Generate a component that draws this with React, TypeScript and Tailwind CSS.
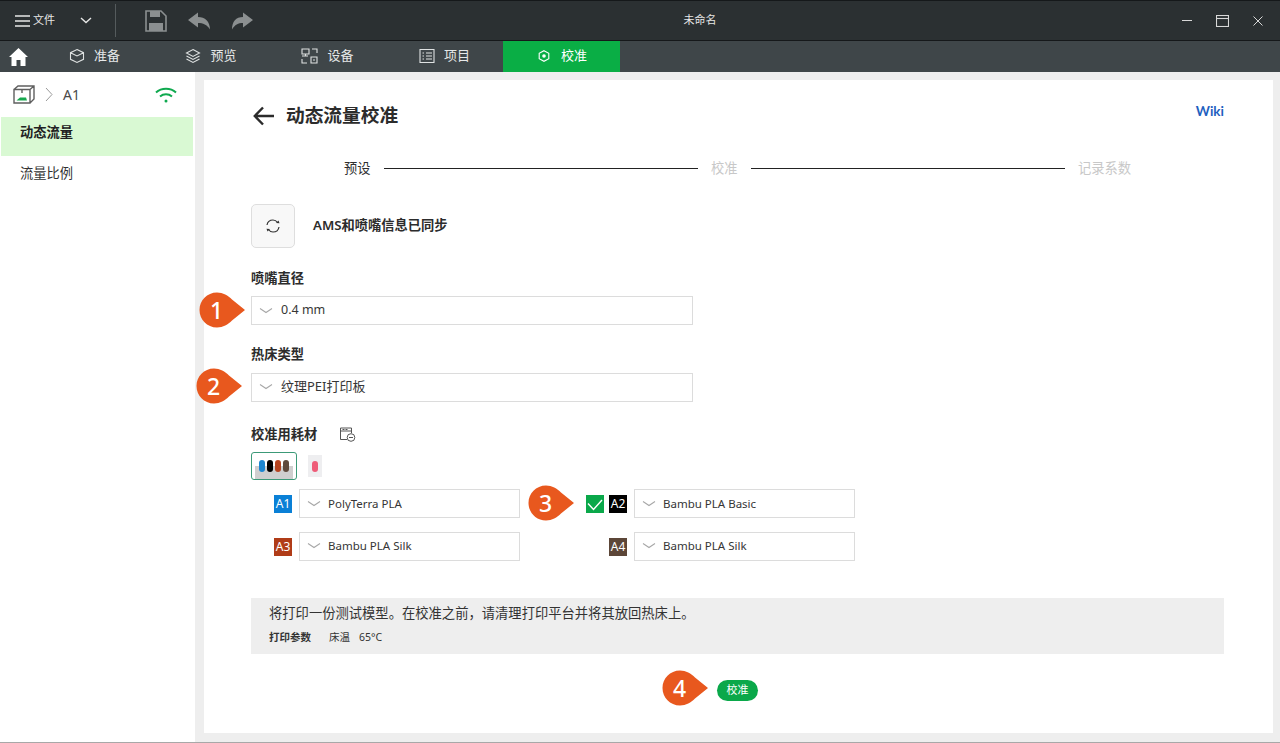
import type { ReactNode } from 'react';

const font = { fontFamily: '"Noto Sans", "Noto Sans CJK SC", sans-serif' };

const Chevron = () => (
  <svg width="14" height="8" viewBox="0 0 14 8" fill="none" stroke="#a8a8a8" strokeWidth="1.1" className="shrink-0">
    <path d="M1 1.5 7 5.5 13 1.5" />
  </svg>
);

const Select = ({ value, className }: { value: string; className: string }) => (
  <div className={`flex h-[29px] items-center border border-[#dcdcdc] pl-[7px] text-[#363636] ${className}`}>
    <Chevron />
    <span className="ml-[8px]">{value}</span>
  </div>
);

const FilamentSelect = ({ value, className }: { value: string; className: string }) => (
  <div className={`flex h-[29px] w-[221px] items-center border border-[#dcdcdc] pl-[7px] text-[11.5px] text-[#363636] ${className}`}>
    <Chevron />
    <span className="ml-[7px]">{value}</span>
  </div>
);

const Badge = ({ n, className }: { n: number; className: string }) => (
  <div className={`absolute flex h-[36px] w-[47px] ${className}`}>
    <svg width="47" height="36" viewBox="0 0 47 36" className="absolute inset-0">
      <path d="M18 0.5C24 0.5 29 3.5 33 7.5L46 18 33 28.5C29 32.5 24 35.5 18 35.5 8 35.5 0.5 27.5 0.5 18 0.5 8.5 8 0.5 18 0.5Z" fill="#e8581e" />
    </svg>
    <span className="relative w-[35px] text-center text-[23px] leading-[36px] font-medium text-white">{n}</span>
  </div>
);

const Tag = ({ label, color }: { label: string; color: string }) => (
  <div className={`flex h-[18px] w-[18px] items-center justify-center text-[12px] leading-none text-white ${color}`}>{label}</div>
);

const NavTab = ({ icon, label, className }: { icon: ReactNode; label: string; className: string }) => (
  <div className={`flex h-full items-center justify-center pb-px text-[13px] ${className}`}>
    {icon}
    <span>{label}</span>
  </div>
);

const navStroke = { fill: 'none', stroke: '#dfe2e2', strokeWidth: 1.1 };

const Label = ({ text, className }: { text: string; className: string }) => (
  <div className={`h-5 text-[13.25px] leading-5 font-semibold text-[#2c2c2c] ${className}`}>{text}</div>
);

export default function App() {
  return (
    <div className="flex h-[743px] w-[1280px] flex-col overflow-hidden bg-[#eeeeee]" style={font}>
      {/* title bar */}
      <div className="flex h-[41px] shrink-0 items-center border-y border-[#15181a] bg-[#2b3032] text-[#e6e6e6]">
        <div className="flex w-[260px] items-center">
          <svg width="16" height="12" viewBox="0 0 16 12" className="ml-[15px]" stroke="#e6e6e6" strokeWidth="1.3">
            <path d="M0 1h15M0 6h15M0 11h15" />
          </svg>
          <span className="ml-[2px] text-[11px]">文件</span>
          <svg width="12" height="7" viewBox="0 0 12 7" className="ml-[25px]" fill="none" stroke="#e6e6e6" strokeWidth="1.4">
            <path d="M1 1 6 5.5 11 1" />
          </svg>
          <div className="ml-[23px] h-[33px] w-px bg-[#555b5d]" />
          <svg width="22" height="22" viewBox="0 0 22 22" className="ml-[29px]">
            <path d="M1 1h15l5 5v15H1Z" fill="none" stroke="#8b8f90" strokeWidth="1.6" />
            <path d="M5 1h10v6H5ZM4 13h14v8H4Z" fill="#8b8f90" />
          </svg>
          <svg width="22" height="18" viewBox="0 0 22 18" className="ml-[21px]">
            <path d="M10 0.5 0 8 10 15.5V11C15 11 19 12.5 22 17.5 22 9.5 17 5 10 5Z" fill="#8b8f90" />
          </svg>
          <svg width="21" height="18" viewBox="0 0 21 18" className="ml-[22px]">
            <path d="M11 0.5 21 8 11 15.5V11C6 11 3 12.5 0 17.5 0 9.5 4 5 11 5Z" fill="#8b8f90" />
          </svg>
        </div>
        <div className="flex-1 text-center text-[11px]">未命名</div>
        <div className="flex w-[140px] items-center">
          <div className="ml-[42px] h-[1.5px] w-[10px] bg-[#d8d8d8]" />
          <svg width="13" height="12" viewBox="0 0 13 12" className="ml-[24px]" fill="none" stroke="#d8d8d8" strokeWidth="1.1">
            <rect x="0.5" y="0.5" width="12" height="11" />
            <path d="M0.5 3.5h12" />
          </svg>
          <svg width="10" height="10" viewBox="0 0 10 10" className="ml-[24px]" stroke="#d8d8d8" strokeWidth="1">
            <path d="M0.5 0.5 9.5 9.5M9.5 0.5 0.5 9.5" />
          </svg>
        </div>
      </div>

      {/* tab bar */}
      <div className="flex h-[31px] shrink-0 items-center bg-[#3f4649]">
        <div className="flex h-full w-[36px] items-center justify-center">
          <svg width="19" height="18" viewBox="0 0 19 18" fill="#ffffff">
            <path d="M9.5 0 19 9h-2.5v9H11.5v-6h-4v6H2.5V9H0Z" />
          </svg>
        </div>
        <NavTab
          label="准备"
          className="w-[117px] gap-[9px] text-[#e6e8e8]"
          icon={
            <svg width="16" height="16" viewBox="0 0 16 16" {...navStroke}>
              <path d="M8 1.5 14.5 4.7v6.6L8 14.5 1.5 11.3V4.7ZM1.5 4.7 8 8l6.5-3.3" />
            </svg>
          }
        />
        <NavTab
          label="预览"
          className="w-[116px] gap-[9px] text-[#e6e8e8]"
          icon={
            <svg width="16" height="16" viewBox="0 0 16 16" {...navStroke}>
              <path d="M8 1.5 14.5 5 8 8.5 1.5 5ZM1.5 8 8 11.5 14.5 8M1.5 11 8 14.5 14.5 11" />
            </svg>
          }
        />
        <NavTab
          label="设备"
          className="w-[117px] gap-[9px] text-[#e6e8e8]"
          icon={
            <svg width="17" height="16" viewBox="0 0 17 16" {...navStroke}>
              <path d="M1 1h7v5H1ZM4.5 6v2M1 8h6M11 1h5v4M1 11v4h5M10 9h6v6h-6ZM12 12h2" />
            </svg>
          }
        />
        <NavTab
          label="项目"
          className="w-[117px] gap-[9px] text-[#e6e8e8]"
          icon={
            <svg width="16" height="16" viewBox="0 0 16 16" {...navStroke}>
              <path d="M1 1.5h14v13H1ZM3.5 5h1.500M3.5 8h1.500M3.5 11h1.500M7 5h6M7 8h6M7 11h6" />
            </svg>
          }
        />
        <NavTab
          label="校准"
          className="w-[117px] gap-[11px] bg-[#0aae45] pl-[2px] text-white"
          icon={
            <svg width="12" height="12" viewBox="0 0 12 12" fill="none" stroke="#ffffff" strokeWidth="1.1">
              <path d="M6 0.7 10.8 3.3v5.4L6 11.3 1.2 8.7V3.3Z" />
              <circle cx="6" cy="6" r="1.8" fill="#ffffff" stroke="none" />
            </svg>
          }
        />
      </div>

      <div className="flex min-h-0 flex-1 border-b border-[#a8a8a8]">
        {/* sidebar */}
        <aside className="flex w-[195px] shrink-0 flex-col bg-white text-[13.25px] text-[#323232]">
          <div className="flex h-[45px] shrink-0 items-center">
            <svg width="22" height="19" viewBox="0 0 22 19" className="ml-[13px]" fill="none" stroke="#5f5f5f" strokeWidth="1.4">
              <path d="M1 4.5h16V18H1ZM1 4.5 5 1h16v13l-4 4M17 4.5 21 1" />
              <path d="M9 5v3" />
              <path d="M3.5 15.5 7 12.5h6l1 3Z" fill="#17a84e" stroke="none" />
            </svg>
            <svg width="8" height="15" viewBox="0 0 8 15" className="ml-[10px]" fill="none" stroke="#9a9a9a" strokeWidth="1">
              <path d="M1 1 7 7.5 1 14" />
            </svg>
            <span className="ml-[10px] text-[14px] text-[#4a4a4a]">A1</span>
            <svg width="22" height="16" viewBox="0 0 22 16" className="ml-[75px]" fill="none" stroke="#0fa94f" strokeWidth="2">
              <path d="M1 5.5C6.5 0.5 15.5 0.5 21 5.5M5 9.5C8.5 6.5 13.5 6.5 17 9.5" />
              <circle cx="11" cy="14" r="1.5" fill="#0fa94f" stroke="none" />
            </svg>
          </div>
          <div className="ml-px flex h-[39px] w-[192px] shrink-0 items-center bg-[#d9f9d3] pb-[7px] pl-[19px] font-bold text-[#222222]">动态流量</div>
          <div className="flex h-[35px] items-center pl-[20px]">流量比例</div>
        </aside>

        {/* main panel */}
        <div className="relative mt-[8px] mb-[9px] ml-[9px] flex w-[1069px] flex-col bg-white pr-[49px] pl-[47px]">
          <div className="mt-[18px] flex h-[34px] shrink-0 items-center">
            <svg width="22" height="20" viewBox="0 0 22 20" className="mt-[2px] ml-[2px]" fill="none" stroke="#2b2b2b" strokeWidth="2.4">
              <path d="M21 10H2M10 1.5 1.8 10 10 18.5" />
            </svg>
            <h1 className="ml-[11px] text-[18.7px] font-semibold text-[#2c2c2c]">动态流量校准</h1>
            <a className="mt-[-8px] ml-auto text-[13.5px] font-bold text-[#1f5fc0]" style={{ fontFamily: 'Lato, sans-serif' }}>Wiki</a>
          </div>

          {/* stepper */}
          <div className="mt-[26px] flex h-5 shrink-0 items-center pl-[93px] text-[13.25px] leading-5">
            <span className="text-[#2e2e2e]">预设</span>
            <div className="ml-[13.5px] h-px w-[314px] bg-[#222222]" />
            <span className="ml-[13px] text-[#c8c8c8]">校准</span>
            <div className="ml-[13.5px] h-px w-[314px] bg-[#222222]" />
            <span className="ml-[13px] text-[#c8c8c8]">记录系数</span>
          </div>

          {/* sync */}
          <div className="mt-[26px] flex h-[44px] shrink-0 items-center">
            <div className="flex h-[44px] w-[44px] items-center justify-center rounded-[5px] border border-[#dedede] bg-[#f8f8f8]">
              <svg width="16" height="14" viewBox="0 0 16 14" fill="none" stroke="#333333" strokeWidth="1.2">
                <path d="M2 6C2.5 3 5 1 8 1c2 0 3.5 1 4.5 2.5M14 8c-.5 3-3 5-6 5-2 0-3.500-1-4.500-2.500" />
                <path d="M11 4 14.5 4.2 13.5 1.5ZM5 10 1.500 9.800 2.500 12.500Z" fill="#333333" stroke="none" />
              </svg>
            </div>
            <span className="ml-[18px] text-[13.25px] font-semibold text-[#2c2c2c]">AMS和喷嘴信息已同步</span>
          </div>

          <Label text="喷嘴直径" className="mt-[20px] shrink-0" />
          <div className="relative mt-[8px] shrink-0">
            <Select value="0.4 mm" className="w-[442px] text-[12.5px]" />
            <Badge n={1} className="top-[-4px] left-[-52px]" />
          </div>

          <Label text="热床类型" className="mt-[19px] shrink-0" />
          <div className="relative mt-[9px] shrink-0">
            <Select value="纹理PEI打印板" className="w-[442px] pb-px text-[13px]" />
            <Badge n={2} className="top-[-5px] left-[-55px]" />
          </div>

          <div className="mt-[22px] flex h-5 shrink-0 items-center">
            <Label text="校准用耗材" className="" />
            <svg width="17" height="15" viewBox="0 0 17 15" className="ml-[22px]" fill="none" stroke="#555555" strokeWidth="1">
              <path d="M8 12.5H1.5V1h11v5M1.5 4h11M3.5 2.5h2M6.5 2.5h2" />
              <circle cx="12" cy="10.5" r="3.8" />
              <path d="M10 10.5h4" />
            </svg>
          </div>

          {/* AMS tabs */}
          <div className="mt-[8px] flex h-[28px] shrink-0 items-center">
            <div className="relative flex h-[28px] w-[46px] items-start justify-center rounded-[3px] border border-[#3c9a78] pt-[7px]">
              <div className="absolute right-[3px] bottom-0 left-[3px] h-[13px] bg-[#cfcfcf]" />
              <div className="relative flex gap-[2px]">
                <span className="h-[12px] w-[6px] rounded-full bg-[#1c86d1]" />
                <span className="h-[12px] w-[6px] rounded-full bg-black" />
                <span className="h-[12px] w-[6px] rounded-full bg-[#b5431f]" />
                <span className="h-[12px] w-[6px] rounded-full bg-[#5f4a3c]" />
              </div>
            </div>
            <div className="ml-[11px] flex h-[22px] w-[14px] items-center justify-center bg-[#eeeef0]">
              <span className="h-[11px] w-[6px] rounded-full bg-[#ee5c78]" />
            </div>
          </div>

          {/* filament rows */}
          <div className="mt-[9px] flex shrink-0 flex-col gap-[14px] pl-[23px]">
            <div className="relative flex items-center">
              <Tag label="A1" color="bg-[#0a80d6]" />
              <FilamentSelect value="PolyTerra PLA" className="ml-[7px]" />
              <Badge n={3} className="top-[-4px] left-[254px]" />
              <div className="ml-[66px] flex h-[18px] w-[18px] items-end justify-center bg-[#0aa84a] pb-[2px]">
                <svg width="16" height="12" viewBox="0 0 16 12" fill="none" stroke="#ffffff" strokeWidth="1.4">
                  <path d="M1 4.5 6.5 10.5 15 1" />
                </svg>
              </div>
              <div className="ml-[5px]"><Tag label="A2" color="bg-black" /></div>
              <FilamentSelect value="Bambu PLA Basic" className="ml-[7px]" />
            </div>
            <div className="flex items-center">
              <Tag label="A3" color="bg-[#b03c18]" />
              <FilamentSelect value="Bambu PLA Silk" className="ml-[7px] pb-px" />
              <div className="ml-[89px]"><Tag label="A4" color="bg-[#5c4638]" /></div>
              <FilamentSelect value="Bambu PLA Silk" className="ml-[7px] pb-px" />
            </div>
          </div>

          {/* info */}
          <div className="mt-[37px] flex h-[56px] shrink-0 flex-col bg-[#eeeeee] pt-[6px] pl-[18px] text-[#333333]">
            <div className="text-[13.3px] leading-[18px]">将打印一份测试模型。在校准之前，请清理打印平台并将其放回热床上。</div>
            <div className="mt-[8px] flex text-[10.5px] leading-[14px]">
              <span className="font-bold">打印参数</span>
              <span className="ml-[18px]">床温</span>
              <span className="ml-[9px]">65°C</span>
            </div>
          </div>

          <div className="relative mt-[26px] flex shrink-0 justify-center">
            <div className="relative flex">
              <Badge n={4} className="top-[-10px] left-[-55px]" />
              <button className="flex h-[21px] w-[41px] items-center justify-center rounded-full bg-[#0aa84a] text-[11px] text-white">校准</button>
            </div>
          </div>
        </div>
      </div>
    </div>
  );
}
